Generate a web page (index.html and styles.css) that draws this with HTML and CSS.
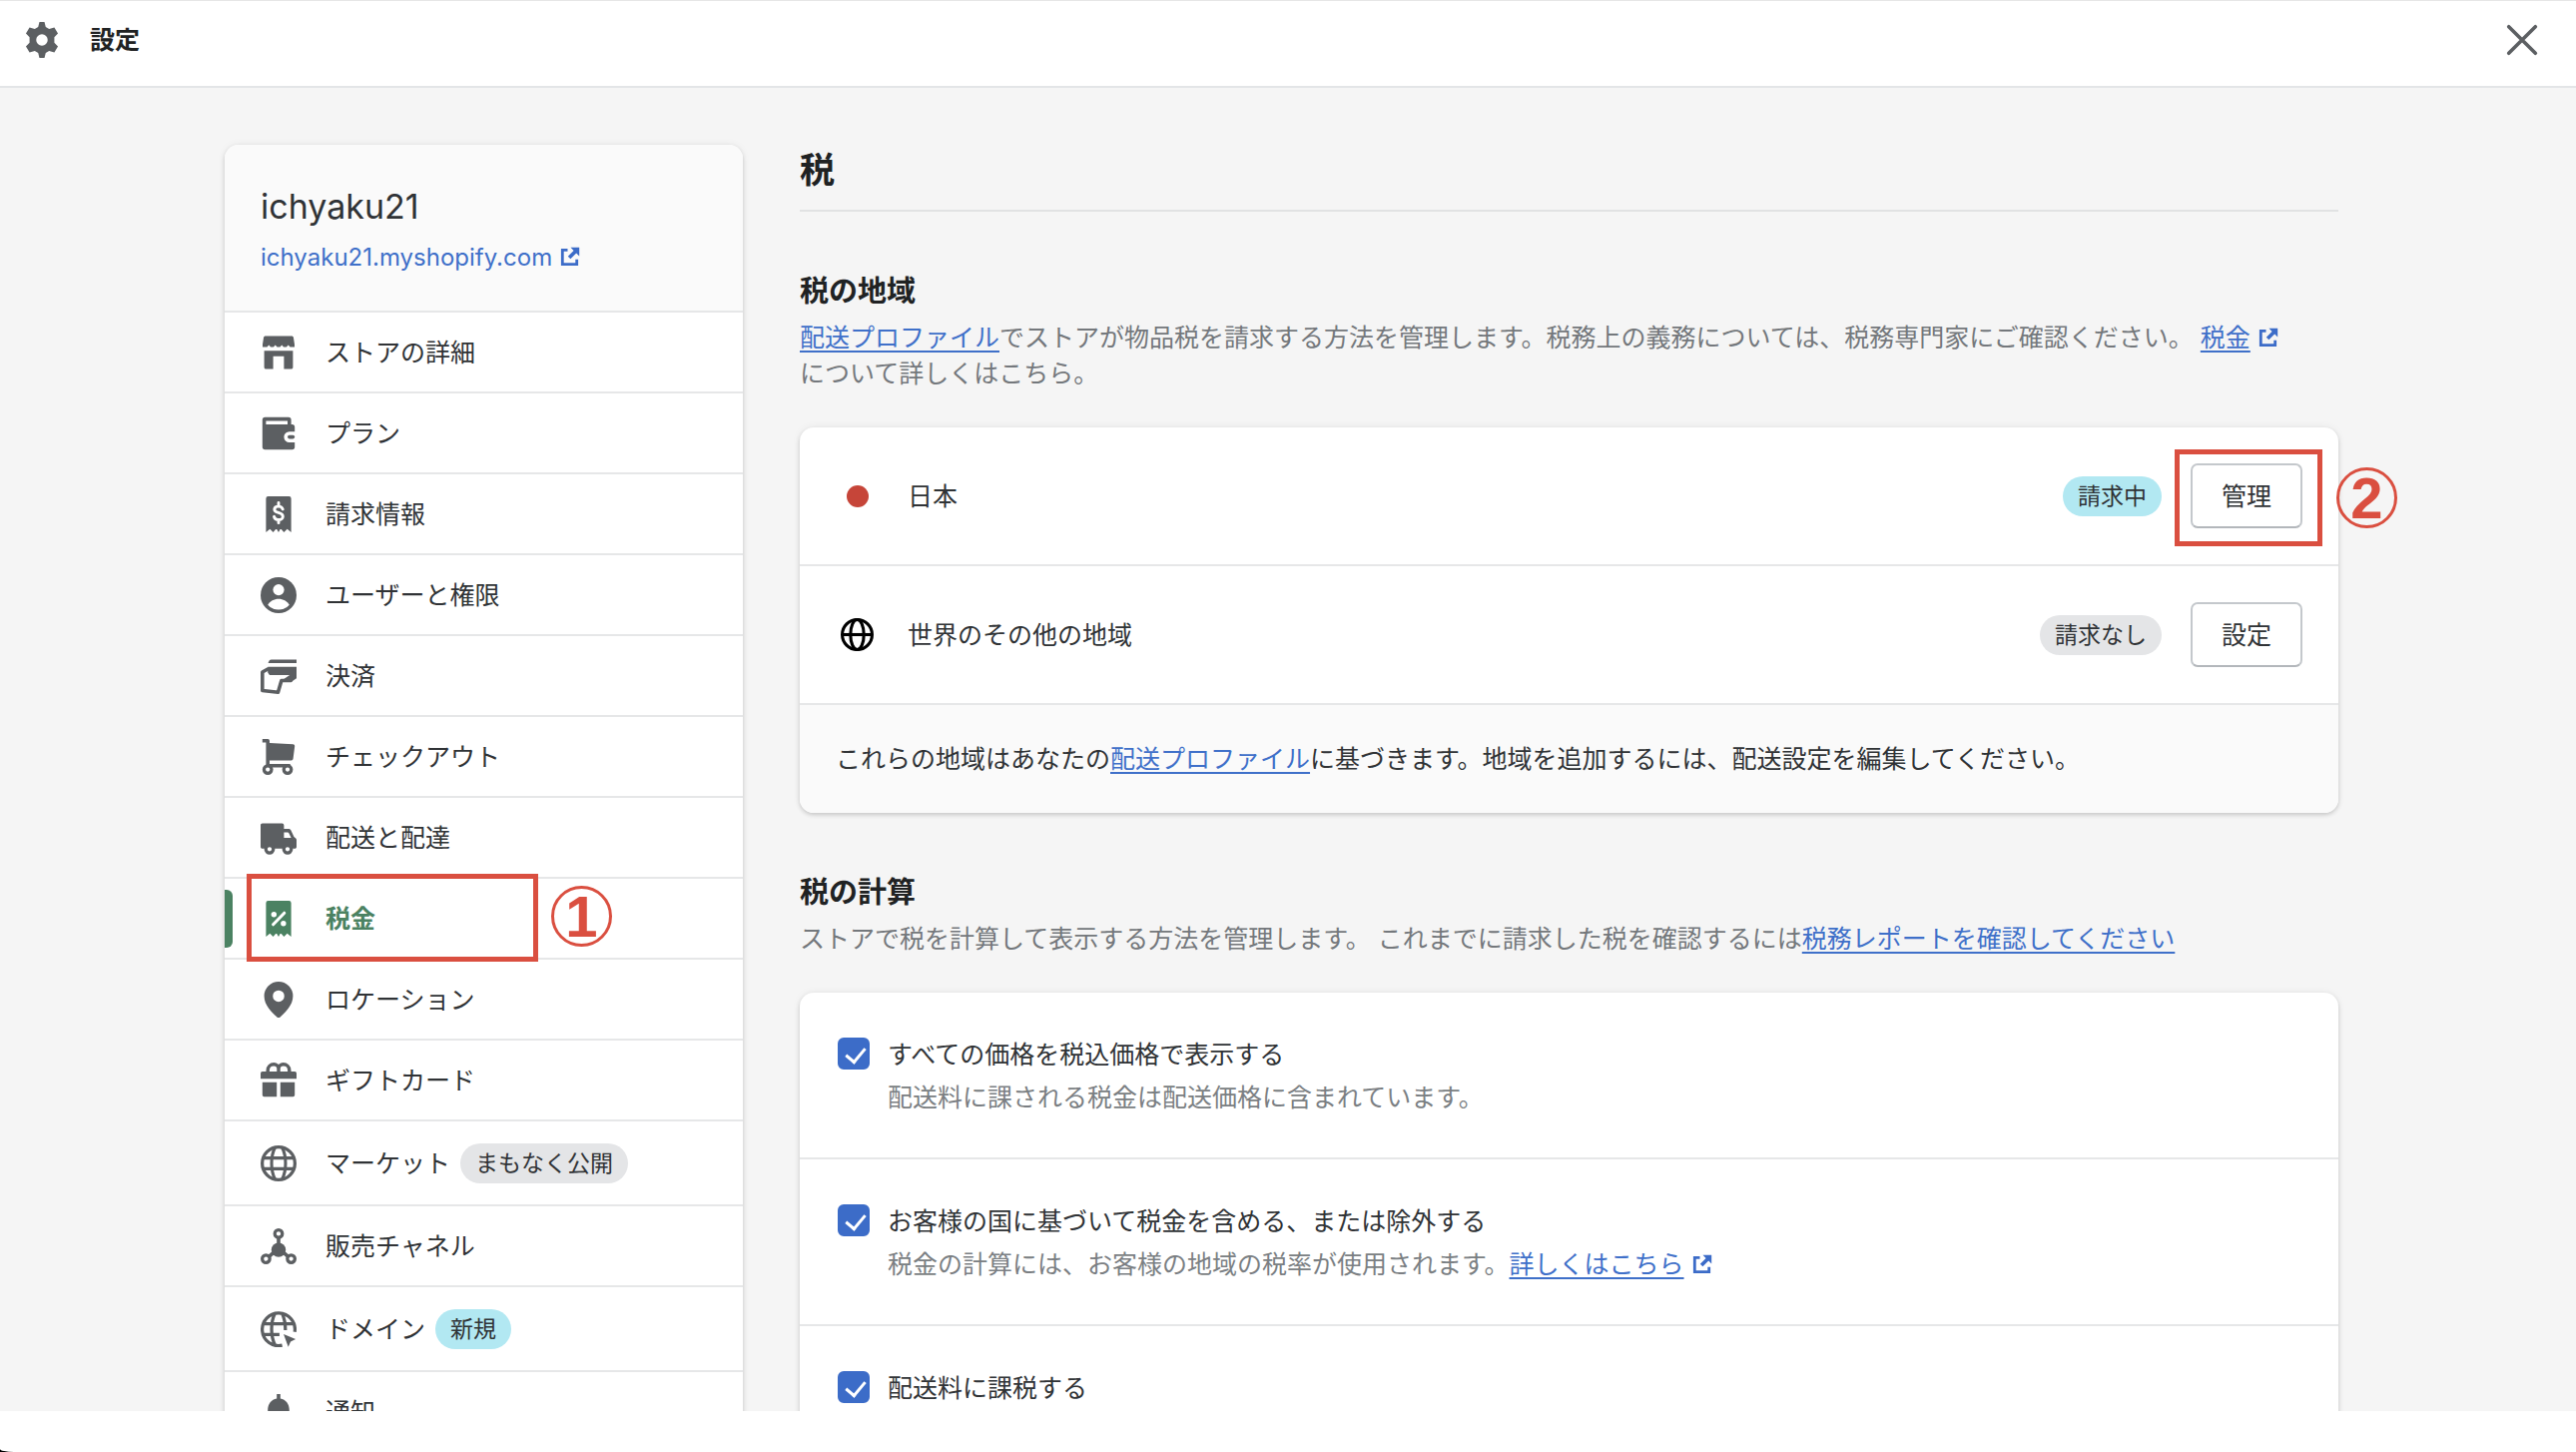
FILE: index.html
```html
<!DOCTYPE html>
<html lang="ja">
<head>
    <meta charset="UTF-8">
    <meta name="viewport" content="width=device-width, initial-scale=1.0">
    <title>設定 - 税</title>
    <link rel="stylesheet" href="styles.css">
</head>
<body>
    <!-- Shared icons -->
    <svg class="sprite" aria-hidden="true">
        <symbol id="external" viewBox="0 0 20 20">
            <path d="M7.5 3.3H2.3v14.4h14.4v-5" fill="none" stroke="currentColor" stroke-width="2.8"/>
            <path d="M10.5.8h8.7v8.7l-3-3-5.8 5.8-2.6-2.6 5.8-5.8z" fill="currentColor"/>
        </symbol>
        <symbol id="receipt" viewBox="0 0 20 20">
            <path d="M4.2 0h11.6A1.2 1.2 0 0 1 17 1.2V20l-2.2-1.8L13 20l-1.5-1.6h-.6L10 20l-1-1.6h-.6L7 20l-1.8-1.8L3 20V1.2A1.2 1.2 0 0 1 4.2 0z" fill="currentColor"/>
        </symbol>
    </svg>

    <div class="window">
        <header class="topbar">
            <div class="topbar-title">
                <svg class="icon" viewBox="0 0 20 20"><path fill-rule="evenodd" fill="currentColor" d="M8.6 0h2.8l.7 2.8 1.9 1.1 2.9-.9 2 3.4-2 2.1v3l2 2.1-2 3.4-2.9-.9-1.9 1.1-.7 2.8H8.6l-.7-2.8L6 16.1l-2.9.9-2-3.4 2-2.1v-3l-2-2.1L3.1 3l2.9.9 1.9-1.1zM10 6.8a3.2 3.2 0 1 0 0 6.4 3.2 3.2 0 0 0 0-6.4z"/></svg>
                <span>設定</span>
            </div>
            <button class="close-btn" type="button" aria-label="閉じる">
                <svg class="icon" viewBox="0 0 20 20"><path d="M2.6 2.6l14.8 14.8M17.4 2.6L2.6 17.4" stroke="currentColor" stroke-width="2" stroke-linecap="round"/></svg>
            </button>
        </header>

        <div class="content">
            <nav class="sidebar">
                <div class="store">
                    <div class="store-name">ichyaku21</div>
                    <a class="store-link" href="#">ichyaku21.myshopify.com<svg class="external"><use href="#external"/></svg></a>
                </div>
                <ul class="nav-list">
                    <li><a href="#">
                        <svg class="icon" viewBox="0 0 20 20"><path fill="currentColor" d="M2.8.9h14.4c.6 0 1 .3 1.1.8l.6 3.8V7h-2.5l-1-1.2L14.4 7h-1.6l-1-1.2-1 1.2H9.2l-1-1.2L7.2 7H5.6l-1-1.2-1 1.2H1.1V5.5l.6-3.8c.1-.5.5-.8 1.1-.8zM2 9h16v9.2c0 .6-.4 1-1 1h-4v-7.1H7v7.1H3c-.6 0-1-.4-1-1z"/></svg>
                        <span>ストアの詳細</span></a></li>
                    <li><a href="#">
                        <svg class="icon" viewBox="0 0 20 20"><path fill-rule="evenodd" fill="currentColor" d="M2.5 1h13A1.5 1.5 0 0 1 17 2.5V5h.5A1.5 1.5 0 0 1 19 6.5V9h-3a3 3 0 0 0 0 6h3v2.5a1.5 1.5 0 0 1-1.5 1.5h-15A1.5 1.5 0 0 1 1 17.5v-15A1.5 1.5 0 0 1 2.5 1zM3 3v2h12V3z"/><rect x="15" y="11" width="4" height="2" rx="1" fill="currentColor"/></svg>
                        <span>プラン</span></a></li>
                    <li><a href="#">
                        <svg class="icon" viewBox="0 0 20 20"><use href="#receipt"/><path d="M12.3 7.2C12 6.1 11.1 5.6 10 5.6c-1.3 0-2.3.6-2.3 1.7 0 2.4 4.7 1.3 4.7 3.9 0 1.1-1 1.9-2.4 1.9-1.2 0-2.2-.6-2.5-1.8M10 3.6v2M10 13v1.8" fill="none" stroke="#fff" stroke-width="1.6" stroke-linecap="round"/></svg>
                        <span>請求情報</span></a></li>
                    <li><a href="#">
                        <svg class="icon" viewBox="0 0 20 20"><circle cx="10" cy="10" r="10" fill="currentColor"/><circle cx="10" cy="7" r="3.1" fill="#fff"/><path d="M4 15.4c1.2-2 3.5-3.3 6-3.3s4.8 1.3 6 3.3a8 8 0 0 1-12 0z" fill="#fff"/></svg>
                        <span>ユーザーと権限</span></a></li>
                    <li><a href="#">
                        <svg class="icon" viewBox="0 0 20 20"><path fill="currentColor" d="M6 .8h14v2H4.2C4.5 1.6 5 .8 6 .8z"/><path fill="currentColor" d="M4 4.8h16v6.4l-2.5 1.7-6-.2 4.7-3.2H5L4 8z"/><path d="M4.5 5.8L1 7.8v10.3l8.7.9 1.9-6.5h5.2l.9-3" fill="none" stroke="currentColor" stroke-width="2" stroke-linejoin="round"/></svg>
                        <span>決済</span></a></li>
                    <li><a href="#">
                        <svg class="icon" viewBox="0 0 20 20"><path fill="currentColor" d="M1 0h3a1 1 0 0 1 1 1v1.2l13 .7c.6 0 1 .5 1 1.1l-.9 7a1 1 0 0 1-1 .9H5v2h11.500v2H3V2H1z"/><circle cx="4" cy="17" r="2.1" fill="#fff" stroke="currentColor" stroke-width="1.8"/><circle cx="15" cy="17" r="2.1" fill="#fff" stroke="currentColor" stroke-width="1.8"/></svg>
                        <span>チェックアウト</span></a></li>
                    <li><a href="#">
                        <svg class="icon" viewBox="0 0 20 20"><path fill-rule="evenodd" fill="currentColor" d="M1 2h11a1 1 0 0 1 1 1v2h2.6c.6 0 1 .3 1.3.8l1.7 3.7 1 .8c.3.2.4.5.4.9V15c0 .6-.4 1-1 1H1c-.6 0-1-.4-1-1V3c0-.6.4-1 1-1zM13 7v3h4l-1.2-2.5c-.2-.3-.4-.5-.8-.5z"/><circle cx="5" cy="16.3" r="2.1" fill="#fff" stroke="currentColor" stroke-width="1.8"/><circle cx="15" cy="16.3" r="2.1" fill="#fff" stroke="currentColor" stroke-width="1.8"/></svg>
                        <span>配送と配達</span></a></li>
                    <li class="active"><a href="#" aria-current="page">
                        <svg class="icon" viewBox="0 0 20 20"><use href="#receipt"/><path d="M7 13.2l6.2-6.4" stroke="#fff" stroke-width="1.7" stroke-linecap="round"/><circle cx="7.4" cy="7.6" r="1.5" fill="#fff"/><circle cx="12.7" cy="12.6" r="1.5" fill="#fff"/></svg>
                        <span>税金</span></a>
                        <div class="mark mark-nav"></div>
                        <div class="step step-nav">1</div></li>
                    <li><a href="#">
                        <svg class="icon" viewBox="0 0 20 20"><path fill-rule="evenodd" fill="currentColor" d="M10 0a8 8 0 0 1 8 8.1c0 5.2-4.6 9.3-7.1 11.6a1.3 1.3 0 0 1-1.8 0C6.6 17.4 2 13.3 2 8.1A8 8 0 0 1 10 0zm0 4.8a3.2 3.2 0 1 0 0 6.4 3.2 3.2 0 0 0 0-6.4z"/></svg>
                        <span>ロケーション</span></a></li>
                    <li><a href="#">
                        <svg class="icon" viewBox="0 0 20 20"><path fill="currentColor" d="M1 5h18a1 1 0 0 1 1 1v3H0V6a1 1 0 0 1 1-1zM1 11h8v8H2a1 1 0 0 1-1-1zM11 11h8v7a1 1 0 0 1-1 1h-7z"/><path d="M10 6V3.5A2.6 2.6 0 0 0 7.4 1C5.5 1 4 2.5 4 4.4V6M10 6V3.5A2.6 2.6 0 0 1 12.6 1C14.5 1 16 2.5 16 4.4V6" fill="none" stroke="currentColor" stroke-width="1.9"/></svg>
                        <span>ギフトカード</span></a></li>
                    <li class="with-badge"><a href="#">
                        <svg class="icon" viewBox="0 0 20 20"><path d="M1.5 7h17M1.5 13h17M8 1.3C5.5 6 5.5 14 8 18.7M12 1.3c2.5 4.7 2.5 12.7 0 17.4" fill="none" stroke="currentColor" stroke-width="1.7"/><circle cx="10" cy="10" r="9.1" fill="none" stroke="currentColor" stroke-width="1.8"/></svg>
                        <span>マーケット</span><span class="badge">まもなく公開</span></a></li>
                    <li><a href="#">
                        <svg class="icon" viewBox="0 0 20 20"><g fill="none" stroke="currentColor" stroke-width="1.8"><circle cx="10" cy="3" r="2.1"/><circle cx="3" cy="17" r="2.1"/><circle cx="17" cy="17" r="2.1"/><path d="M10 5v5M4.8 15.6l3-2.6M15.2 15.6l-3-2.6" stroke-width="2"/></g><circle cx="10" cy="12" r="4" fill="currentColor"/></svg>
                        <span>販売チャネル</span></a></li>
                    <li class="with-badge"><a href="#">
                        <svg class="icon" viewBox="0 0 20 20"><path d="M1.5 7h17M1.5 13h9M8 1.3C5.5 6 5.5 14 8 18.7M12 1.3c1.2 2.5 1.8 5.5 1.8 9.2M12 19a9.1 9.1 0 1 1 7-7.5" fill="none" stroke="currentColor" stroke-width="1.8"/><path d="M12.8 12.8l6.7 2.8-2.8 1.3-1.3 2.9z" fill="currentColor"/></svg>
                        <span>ドメイン</span><span class="badge badge-info">新規</span></a></li>
                    <li><a href="#">
                        <svg class="icon" viewBox="0 0 20 20"><path fill="currentColor" d="M9 0h2v2.500c3 .5 5 3 5 6.500v4l2 2v1H2v-1l2-2V9c0-3.500 2-6 5-6.500zM7.500 17h5a2.500 2.500 0 0 1-5 0z"/></svg>
                        <span>通知</span></a></li>
                </ul>
            </nav>

            <main class="main">
                <h1>税</h1>

                <section>
                    <h2>税の地域</h2>
                    <p class="desc"><a href="#">配送プロファイル</a>でストアが物品税を請求する方法を管理します。税務上の義務については、税務専門家にご確認ください。 <a href="#">税金</a><svg class="external"><use href="#external"/></svg><br>について詳しくはこちら。</p>
                    <div class="card">
                        <div class="region">
                            <span class="region-icon"><span class="flag-dot"></span></span>
                            <span class="region-name">日本</span>
                            <span class="badge badge-info">請求中</span>
                            <div class="region-action">
                                <button class="btn" type="button">管理</button>
                                <div class="mark mark-btn"></div>
                                <div class="step step-btn">2</div>
                            </div>
                        </div>
                        <div class="region">
                            <span class="region-icon"><svg class="world" viewBox="0 0 32 32"><g fill="none" stroke="#000" stroke-width="3"><circle cx="16" cy="16" r="14.5"/><ellipse cx="16" cy="16" rx="6.5" ry="14.5"/><path d="M1 16h30"/></g></svg></span>
                            <span class="region-name">世界のその他の地域</span>
                            <span class="badge">請求なし</span>
                            <div class="region-action">
                                <button class="btn" type="button">設定</button>
                            </div>
                        </div>
                        <div class="card-footer">これらの地域はあなたの<a href="#">配送プロファイル</a>に基づきます。地域を追加するには、配送設定を編集してください。</div>
                    </div>
                </section>

                <section>
                    <h2>税の計算</h2>
                    <p class="desc">ストアで税を計算して表示する方法を管理します。 これまでに請求した税を確認するには<a href="#">税務レポートを確認してください</a></p>
                    <div class="card">
                        <div class="option">
                            <input type="checkbox" id="taxIncluded" checked>
                            <div>
                                <label for="taxIncluded">すべての価格を税込価格で表示する</label>
                                <p class="help">配送料に課される税金は配送価格に含まれています。</p>
                            </div>
                        </div>
                        <div class="option">
                            <input type="checkbox" id="taxCountry" checked>
                            <div>
                                <label for="taxCountry">お客様の国に基づいて税金を含める、または除外する</label>
                                <p class="help">税金の計算には、お客様の地域の税率が使用されます。<a href="#">詳しくはこちら</a><svg class="external"><use href="#external"/></svg></p>
                            </div>
                        </div>
                        <div class="option">
                            <input type="checkbox" id="taxShipping" checked>
                            <div>
                                <label for="taxShipping">配送料に課税する</label>
                            </div>
                        </div>
                    </div>
                </section>
            </main>
        </div>
    </div>
</body>
</html>
```
FILE: styles.css
```css
* {
    margin: 0;
    padding: 0;
    box-sizing: border-box;
}

html {
    background: #000;
}

body {
    font-family: Inter, "Noto Sans CJK JP", sans-serif;
    font-size: 25px;
    line-height: 36px;
    color: #303336;
}

a {
    color: #3f70c9;
    text-underline-offset: 4px;
}

.sprite {
    display: none;
}

.window {
    height: 100vh;
    display: flex;
    flex-direction: column;
    background: #fff;
    padding-bottom: 41px;
    border-bottom-left-radius: 14px 3px;
    overflow: hidden;
}

.icon {
    width: 36px;
    height: 36px;
    flex: none;
    color: #5c5f62;
}

.external {
    width: 20px;
    height: 20px;
    margin-left: 8px;
    color: #3c6cc8;
    vertical-align: -1px;
}

/* Top bar */
.topbar {
    display: flex;
    justify-content: space-between;
    align-items: center;
    height: 88px;
    flex: none;
    padding: 0 36px 7px 24px;
    border-top: 1px solid #e6e6e6;
    border-bottom: 2px solid #e3e5e7;
}

.topbar-title {
    display: flex;
    align-items: center;
    gap: 30px;
    font-weight: 600;
    color: #202223;
}

.close-btn {
    display: flex;
    border: none;
    background: none;
    cursor: pointer;
}

/* Layout */
.content {
    flex: 1;
    min-height: 0;
    overflow: hidden;
    display: grid;
    grid-template-columns: 519px 1fr;
    gap: 57px;
    align-items: start;
    padding: 57px 238px 0 225px;
    background: #f5f5f5;
}

.sidebar,
.card {
    background: #fff;
    border-radius: 14px;
    box-shadow: 0 0 9px rgba(23, 24, 24, 0.06), 0 2px 4px rgba(0, 0, 0, 0.16);
}

/* Sidebar */
.store {
    padding: 37px 36px 35px;
    background: #fafafa;
    border-radius: 14px 14px 0 0;
}

.store-name {
    font-size: 34px;
    line-height: 50px;
    margin-bottom: 8px;
}

.store-link {
    display: block;
    font-size: 24px;
    text-decoration: none;
}

.nav-list {
    list-style: none;
}

.nav-list li {
    position: relative;
    border-top: 2px solid #e6e7e8;
}

.nav-list .active {
    z-index: 1;
}

.nav-list a {
    display: flex;
    align-items: center;
    height: 79px;
    padding: 0 36px;
    color: #303336;
    text-decoration: none;
}

.nav-list .with-badge a {
    height: 83px;
}

.nav-list .icon {
    margin-right: 29px;
}

.nav-list .badge {
    margin-left: 10px;
}

.nav-list .active a,
.nav-list .active .icon {
    color: #4b8262;
    font-weight: 600;
}

.nav-list .active::before {
    content: '';
    position: absolute;
    left: 0;
    top: 11px;
    width: 8px;
    height: 58px;
    background: #4b8262;
    border-radius: 0 6px 6px 0;
}

.badge {
    font-size: 23px;
    line-height: 40px;
    padding: 0 15px;
    border-radius: 20px;
    background: #e4e5e7;
}

.badge-info {
    background: #b2e8f2;
}

/* Red step marks */
.mark {
    position: absolute;
    border: 5px solid #da4f40;
    pointer-events: none;
}

.mark-nav {
    left: 22px;
    top: -5px;
    width: 292px;
    height: 88px;
}

.mark-btn {
    inset: -14px -20px -18px -16px;
}

.step {
    position: absolute;
    width: 61px;
    height: 61px;
    border: 3px solid #da4f40;
    border-radius: 50%;
    color: #da4f40;
    font: bold 58px/55px "Liberation Sans", sans-serif;
    text-align: center;
}

.step-nav {
    left: 327px;
    top: 7px;
}

.step-btn {
    left: 146px;
    top: 4px;
}

/* Main column */
h1 {
    font-size: 35px;
    line-height: 50px;
    font-weight: 600;
    color: #202223;
    padding-bottom: 15px;
    border-bottom: 2px solid #e1e2e3;
}

section {
    padding-top: 60px;
}

h2 {
    font-size: 29px;
    line-height: 40px;
    font-weight: 600;
    color: #202223;
    margin-bottom: 8px;
}

.desc {
    color: #74787c;
    margin-bottom: 36px;
}

.region {
    display: flex;
    align-items: center;
    height: 139px;
    padding: 0 36px;
    border-bottom: 2px solid #e6e7e8;
}

.region-icon {
    width: 43px;
    display: flex;
    justify-content: center;
    margin-right: 29px;
}

.flag-dot {
    width: 22px;
    height: 22px;
    border-radius: 50%;
    background: #c64539;
}

.world {
    width: 33px;
    height: 33px;
}

.region-name {
    flex: 1;
}

.region-action {
    position: relative;
    margin-left: 29px;
}

.btn {
    display: block;
    height: 65px;
    padding: 0 29px;
    font: inherit;
    color: #303336;
    background: #fff;
    border: 2px solid #c4c8cc;
    border-bottom-color: #b3b7bb;
    border-radius: 7px;
    cursor: pointer;
}

.card-footer {
    padding: 36px;
    background: #fafafa;
    border-radius: 0 0 14px 14px;
}

.option {
    display: flex;
    gap: 18px;
    padding: 44px 36px 42px;
    border-bottom: 2px solid #e6e7e8;
}

.option:last-child {
    border-bottom: none;
}

.option input {
    appearance: none;
    flex: none;
    width: 32px;
    height: 32px;
    margin: 1px 0 0 2px;
    border: 2px solid #8c9196;
    border-radius: 6px;
    position: relative;
}

.option input:checked {
    border-color: #3c6cc8;
    background: #3c6cc8;
}

.option input:checked::before {
    content: '';
    position: absolute;
    left: 10px;
    top: 4px;
    width: 9px;
    height: 16px;
    border: solid #fff;
    border-width: 0 3px 3px 0;
    transform: rotate(40deg);
}

.option label {
    display: block;
    margin-bottom: 7px;
}

.help {
    color: #7b7f83;
}
```
